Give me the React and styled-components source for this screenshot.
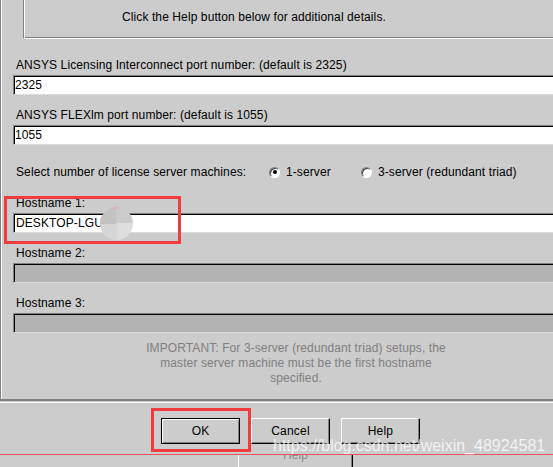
import React from 'react';
import styled, { createGlobalStyle } from 'styled-components';

const Global = createGlobalStyle`
  html, body { margin: 0; padding: 0; background: #cccccc; }
  body {
    width: 553px; height: 467px; overflow: hidden;
    font-family: "Liberation Sans", Arial, sans-serif;
    font-size: 12px; color: #000;
  }
`;

const Screen = styled.div`
  position: relative;
  width: 553px;
  height: 467px;
  overflow: hidden;
  background: #cccccc;
  display: flex;
  flex-direction: column;
  letter-spacing: 0.1px;
`;

const Panel = styled.div`
  box-sizing: border-box;
  height: 401px;
  flex: none;
  border-left: 1px solid #808080;
  border-bottom: 2px solid #808080;
  box-shadow: inset 1px 0 #ffffff;
  padding-left: 12px;
  display: flex;
  flex-direction: column;
  overflow: hidden;
`;

const InfoBox = styled.div`
  box-sizing: border-box;
  flex: none;
  margin-left: 10px;
  width: 600px;
  height: 39px;
  border-left: 1px solid #808080;
  border-bottom: 1px solid #ffffff;
  box-shadow: inset 1px 0 #ffffff, inset 0 -1px #808080;
  padding: 10px 0 0 98px;
  line-height: 14px;
  white-space: nowrap;
`;

const Label = styled.div`
  margin: ${p => p.$top}px 0 0 3px;
  line-height: 14px;
  height: 14px;
  white-space: nowrap;
`;

const Field = styled.input`
  box-sizing: border-box;
  flex: none;
  display: block;
  margin-top: 3px;
  width: 560px;
  height: 20px;
  padding: 0 0 0 ${p => (p.$pad ?? 1)}px;
  border-style: solid;
  border-width: 1px;
  border-color: #808080 #dcdcdc #dcdcdc #808080;
  box-shadow: inset 1px 1px #000000;
  background: ${p => (p.disabled ? '#b3b3b3' : '#ffffff')};
  font-family: "Liberation Sans", Arial, sans-serif;
  font-size: 12px;
  letter-spacing: 0.1px;
  color: #000;
  outline: none;
`;

const RadioRow = styled.div`
  display: flex;
  align-items: center;
  height: 14px;
  margin: 20px 0 0 3px;
  white-space: nowrap;
`;

const Prompt = styled.span`
  width: 253px;
  flex: none;
`;

const Option = styled.label`
  display: flex;
  align-items: center;
  gap: 6px;
  width: ${p => p.$w}px;
  flex: none;
`;

const Radio = styled.span`
  position: relative;
  box-sizing: border-box;
  width: 11px;
  height: 11px;
  border-radius: 50%;
  border: 1px solid;
  border-color: #808080 #ffffff #ffffff #808080;
  box-shadow: inset 1px 1px #404040;
  background: #ffffff;
  flex: none;
  &::after {
    content: '';
    display: ${p => (p.$checked ? 'block' : 'none')};
    position: absolute;
    left: 2.5px;
    top: 2.5px;
    width: 4px;
    height: 4px;
    border-radius: 50%;
    background: #000;
  }
`;

const Note = styled.div`
  margin: 8px 0 0 123px;
  width: 320px;
  text-align: center;
  line-height: 15px;
  color: #808080;
  white-space: nowrap;
`;

const ButtonBar = styled.div`
  box-sizing: border-box;
  flex: none;
  margin-top: 1px;
  height: 52px;
  border-top: 1px solid #ffffff;
  padding: 15px 0 0 161px;
  display: flex;
  gap: 11px;
`;

const Button = styled.button`
  box-sizing: border-box;
  width: 79px;
  height: 26px;
  padding: 0;
  background: #cccccc;
  font-family: "Liberation Sans", Arial, sans-serif;
  font-size: 12px;
  letter-spacing: 0.2px;
  color: #000;
  border-style: solid;
  border-width: 1px;
  border-color: ${p => (p.$default ? '#000 #000 #000 #000' : '#fff #000 #000 #fff')};
  box-shadow: ${p =>
    p.$default ? 'inset 1px 1px #fff, inset -1px -1px #808080' : 'inset -1px -1px #808080'};
`;

const PinkLine = styled.div`
  flex: none;
  height: 1px;
  background: #e8525e;
`;

const BehindStrip = styled.div`
  flex: none;
  height: 12px;
  overflow: hidden;
  padding-left: 238px;
`;

const GhostButton = styled.div`
  box-sizing: border-box;
  width: 115px;
  height: 30px;
  margin-top: -13px;
  border-left: 1px solid #ffffff;
  border-right: 1px solid #000000;
  box-shadow: inset -1px 0 #808080;
  text-align: center;
  line-height: 26px;
  color: #8a8a8a;
`;

const Annotation = styled.div`
  position: absolute;
  box-sizing: border-box;
  left: ${p => p.$x}px;
  top: ${p => p.$y}px;
  width: ${p => p.$w}px;
  height: ${p => p.$h}px;
  border: 3px solid #f03c3c;
  pointer-events: none;
`;

const Blur = styled.div`
  position: absolute;
  left: 100px;
  top: 207px;
  width: 33px;
  height: 33px;
  border-radius: 50%;
  background: conic-gradient(#cbcbcb 0 90deg, #dddddd 90deg 180deg, #d6d6d6 180deg 270deg, #c2c2c2 270deg 360deg);
  &::before {
    content: '';
    position: absolute;
    left: 14px;
    top: 0;
    width: 5px;
    height: 2px;
    border-radius: 2px;
    background: #e4b0b0;
  }
`;

const Watermark = styled.div`
  position: absolute;
  left: 273px;
  top: 437px;
  font-family: "Liberation Sans", Arial, sans-serif;
  font-size: 16px;
  line-height: 18px;
  letter-spacing: 0;
  color: rgba(255, 255, 255, 0.75);
  white-space: nowrap;
  pointer-events: none;
`;

export default function App() {
  return (
    <>
      <Global />
      <Screen>
        <Panel>
          <InfoBox>Click the Help button below for additional details.</InfoBox>

          <Label $top={19}>ANSYS Licensing Interconnect port number: (default is 2325)</Label>
          <Field defaultValue="2325" readOnly />

          <Label $top={13}>ANSYS FLEXlm port number: (default is 1055)</Label>
          <Field defaultValue="1055" readOnly />

          <RadioRow>
            <Prompt>Select number of license server machines:</Prompt>
            <Option $w={92}>
              <Radio $checked />
              1-server
            </Option>
            <Option $w={200}>
              <Radio />
              3-server (redundant triad)
            </Option>
          </RadioRow>

          <Label $top={17}>Hostname 1:</Label>
          <Field defaultValue="DESKTOP-LGU" $pad={2} readOnly />

          <Label $top={13}>Hostname 2:</Label>
          <Field disabled />

          <Label $top={13}>Hostname 3:</Label>
          <Field disabled />

          <Note>
            IMPORTANT: For 3-server (redundant triad) setups, the
            <br />
            master server machine must be the first hostname
            <br />
            specified.
          </Note>
        </Panel>

        <ButtonBar>
          <Button $default>OK</Button>
          <Button>Cancel</Button>
          <Button>Help</Button>
        </ButtonBar>

        <PinkLine />
        <BehindStrip>
          <GhostButton>Help</GhostButton>
        </BehindStrip>

        <Blur />
        <Annotation $x={4} $y={196} $w={177} $h={48} />
        <Annotation $x={151} $y={408} $w={100} $h={44} />
        <Watermark>https://blog.csdn.net/weixin_48924581</Watermark>
      </Screen>
    </>
  );
}
